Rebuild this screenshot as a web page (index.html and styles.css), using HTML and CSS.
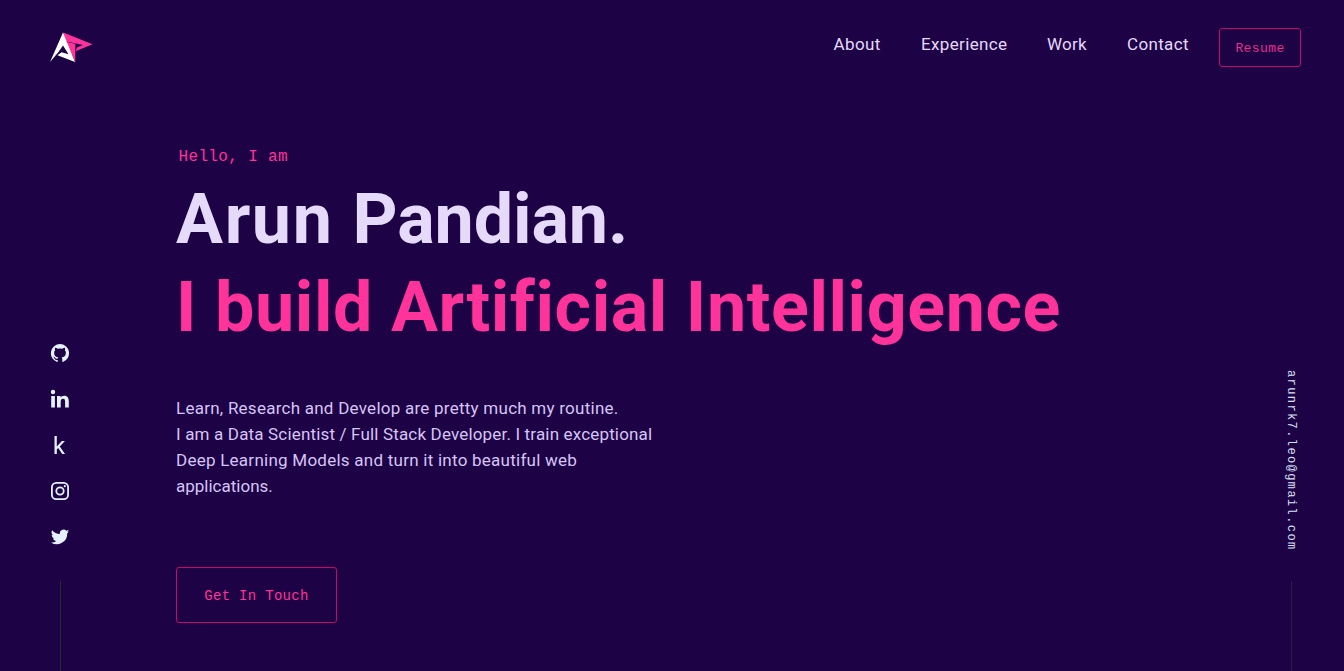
FILE: index.html
```html
<!DOCTYPE html>
<html lang="en">
<head>
<meta charset="utf-8">
<title>Arun Pandian</title>
<link rel="stylesheet" href="styles.css">
</head>
<body>
<header class="header">
  <a class="logo" aria-label="Home">
    <svg width="44" height="32" viewBox="0 0 44 32">
      <path fill="#ff3399" d="M14.300 .5L43.500 12.300L26.500 19.200L28 15.600L34 12.900L16.500 9.200Z"/>
      <path fill="#ff3399" d="M16.500 9.800L26.300 11.800V30L23 22.500Z"/>
      <path fill="#fff" d="M14 .5L26 30L8.500 23.200L12.500 20.300L19.500 22.300L14 13.500L9.500 20L1 30Z"/>
    </svg>
  </a>
  <nav class="nav">
    <a class="nav-link about">About</a>
    <a class="nav-link experience">Experience</a>
    <a class="nav-link work">Work</a>
    <a class="nav-link contact">Contact</a>
    <a class="resume">Resume</a>
  </nav>
</header>
<div class="page">
  <aside class="side social">
    <svg width="20" height="20" viewBox="0 0 24 24"><path d="M12 1.300a11 11 0 0 0-3.500 21.400c.55.1.75-.24.75-.53v-1.900c-3.060.67-3.700-1.470-3.700-1.470-.5-1.270-1.220-1.610-1.220-1.610-1-.68.08-.67.08-.67 1.100.08 1.680 1.130 1.680 1.130.98 1.680 2.570 1.200 3.200.92.100-.71.380-1.200.7-1.470-2.440-.28-5-1.220-5-5.440 0-1.200.43-2.180 1.130-2.950-.11-.28-.49-1.400.11-2.910 0 0 .92-.3 3.020 1.130a10.500 10.500 0 0 1 5.500 0c2.100-1.420 3.020-1.130 3.020-1.130.6 1.510.22 2.630.11 2.910.7.770 1.130 1.750 1.130 2.950 0 4.230-2.570 5.160-5.020 5.430.39.340.74 1.010.74 2.040v3.020c0 .29.200.64.760.53A11 11 0 0 0 12 1.300z"/></svg>
    <svg width="20" height="20" viewBox="0 0 20 20"><circle cx="3" cy="3" r="2.200"/><path d="M1.200 7h3.700v11.500H1.200zM7 7h3.500v1.600c.7-1.200 2-1.900 3.600-1.900 3.700 0 4.700 2.300 4.700 5.700v6.100h-3.700v-5.500c0-1.800-.2-3.200-2.100-3.200-1.800 0-2.300 1.400-2.300 3.100v5.600H7z"/></svg>
    <svg width="20" height="20" viewBox="0 0 20 20"><path d="M4.500 1h2.300v10.600L11.900 6h3l-5.100 5.400 5.200 7.700h-2.800l-4-6.100-1.400 1.500v4.600H4.500z"/></svg>
    <svg width="20" height="20" viewBox="0 0 20 20"><rect class="outline" x="1.900" y="1.900" width="16.200" height="16.200" rx="4.400"/><circle class="outline" cx="10" cy="10" r="3.700"/><circle cx="14.800" cy="5.200" r="1.100"/></svg>
    <svg width="20" height="20" viewBox="0 0 24 24"><path d="M23 5.100c-.8.400-1.600.6-2.500.7.900-.5 1.600-1.400 1.900-2.400-.8.500-1.800.9-2.800 1.100a4.500 4.500 0 0 0-7.700 4C8.200 8.300 4.700 6.600 2.600 3.900a4.400 4.400 0 0 0 1.400 5.900c-.7 0-1.400-.2-2-.5 0 2.200 1.500 4 3.500 4.400-.6.200-1.300.2-2 .1.600 1.700 2.200 3 4.100 3A8.900 8.900 0 0 1 1.100 18.600 12.700 12.700 0 0 0 20.700 7.400c.9-.6 1.600-1.400 2.300-2.300z"/></svg>
    <i class="rule"></i>
  </aside>
  <main class="hero">
    <p class="greeting">Hello, I am</p>
    <h1 class="name"><span class="first">Arun </span><span class="last">Pandian.</span></h1>
    <h2 class="tagline">I build Artificial Intelligence</h2>
    <p class="intro"><span class="l1">Learn, Research and Develop are pretty much my routine.</span><span class="l2">I am a Data Scientist / Full Stack Developer. I train exceptional</span><span class="l3">Deep Learning Models and turn it into beautiful web</span><span class="l4">applications.</span></p>
    <a class="cta">Get In Touch</a>
  </main>
  <aside class="side contact-side">
    <a class="email">arunrk7.leo@gmail.com</a>
    <i class="rule"></i>
  </aside>
</div>
</body>
</html>
```
FILE: styles.css
```css
* { box-sizing: border-box; }
body { margin: 0; height: 671px; overflow: hidden; display: flex; flex-direction: column; background: #1d0245; font-family: Roboto, sans-serif; color: #e6dafb; }
h1, h2, p { margin: 0; }
.header { height: 96px; flex: none; display: flex; justify-content: space-between; align-items: flex-start; padding: 28px 43px 0 49px; }
.logo { padding-top: 4px; }
.logo svg { display: block; }
.nav { display: flex; align-items: flex-start; }
.nav-link { font-size: 17px; line-height: 32px; white-space: nowrap; }
.about { width: 87.500px; letter-spacing: .4px; }
.experience { width: 126px; letter-spacing: .35px; }
.work { width: 80px; letter-spacing: .2px; }
.contact { width: 92px; letter-spacing: .35px; }
.resume { width: 82px; height: 39px; border: 1px solid #c20a68; border-radius: 3px; color: #e6308f; font: 13px/39px "Liberation Mono", monospace; letter-spacing: .4px; text-align: center; }
.page { flex: 1; min-height: 0; display: grid; grid-template-columns: 120px 56px 1fr 106px; }
.side { display: flex; flex-direction: column; align-items: center; justify-content: flex-end; }
.social { grid-column: 1; gap: 26px; fill: #e6f1ff; }
.social svg { display: block; flex: none; }
.social .rule { margin-top: 8px; }
.outline { fill: none; stroke: #e6f1ff; stroke-width: 1.800; }
.rule { width: 1px; height: 90px; flex: none; background: #233026; }
.contact-side .rule { background: #29203f; }
.hero { grid-column: 3; padding-top: 48px; }
.greeting { padding-left: 2.500px; font: 16px/26px "Liberation Mono", monospace; letter-spacing: .35px; color: #ff3399; }
.name, .tagline { font-size: 70px; line-height: 88px; font-weight: 700; white-space: nowrap; }
.name { padding-top: 5px; }
.first { letter-spacing: 1.600px; }
.last { letter-spacing: -.1px; }
.tagline { color: #ff3399; letter-spacing: .580px; }
.intro { margin-top: 44px; font-size: 17px; line-height: 26px; color: #d6c5f5; white-space: nowrap; }
.intro span { display: block; width: max-content; }
.l1 { letter-spacing: .250px; }
.l2 { letter-spacing: .165px; }
.l3 { letter-spacing: .250px; }
.cta { display: block; width: 161px; height: 56px; margin-top: 68px; border: 1px solid #c20a68; border-radius: 3px; color: #ff3399; font: 14px/56px "Liberation Mono", monospace; letter-spacing: .3px; text-align: center; }
.contact-side { grid-column: 4; }
.email { writing-mode: vertical-rl; margin-bottom: 30px; font: 12px/20px "Liberation Mono", monospace; letter-spacing: 1.400px; color: #d9e0f5; }
```
